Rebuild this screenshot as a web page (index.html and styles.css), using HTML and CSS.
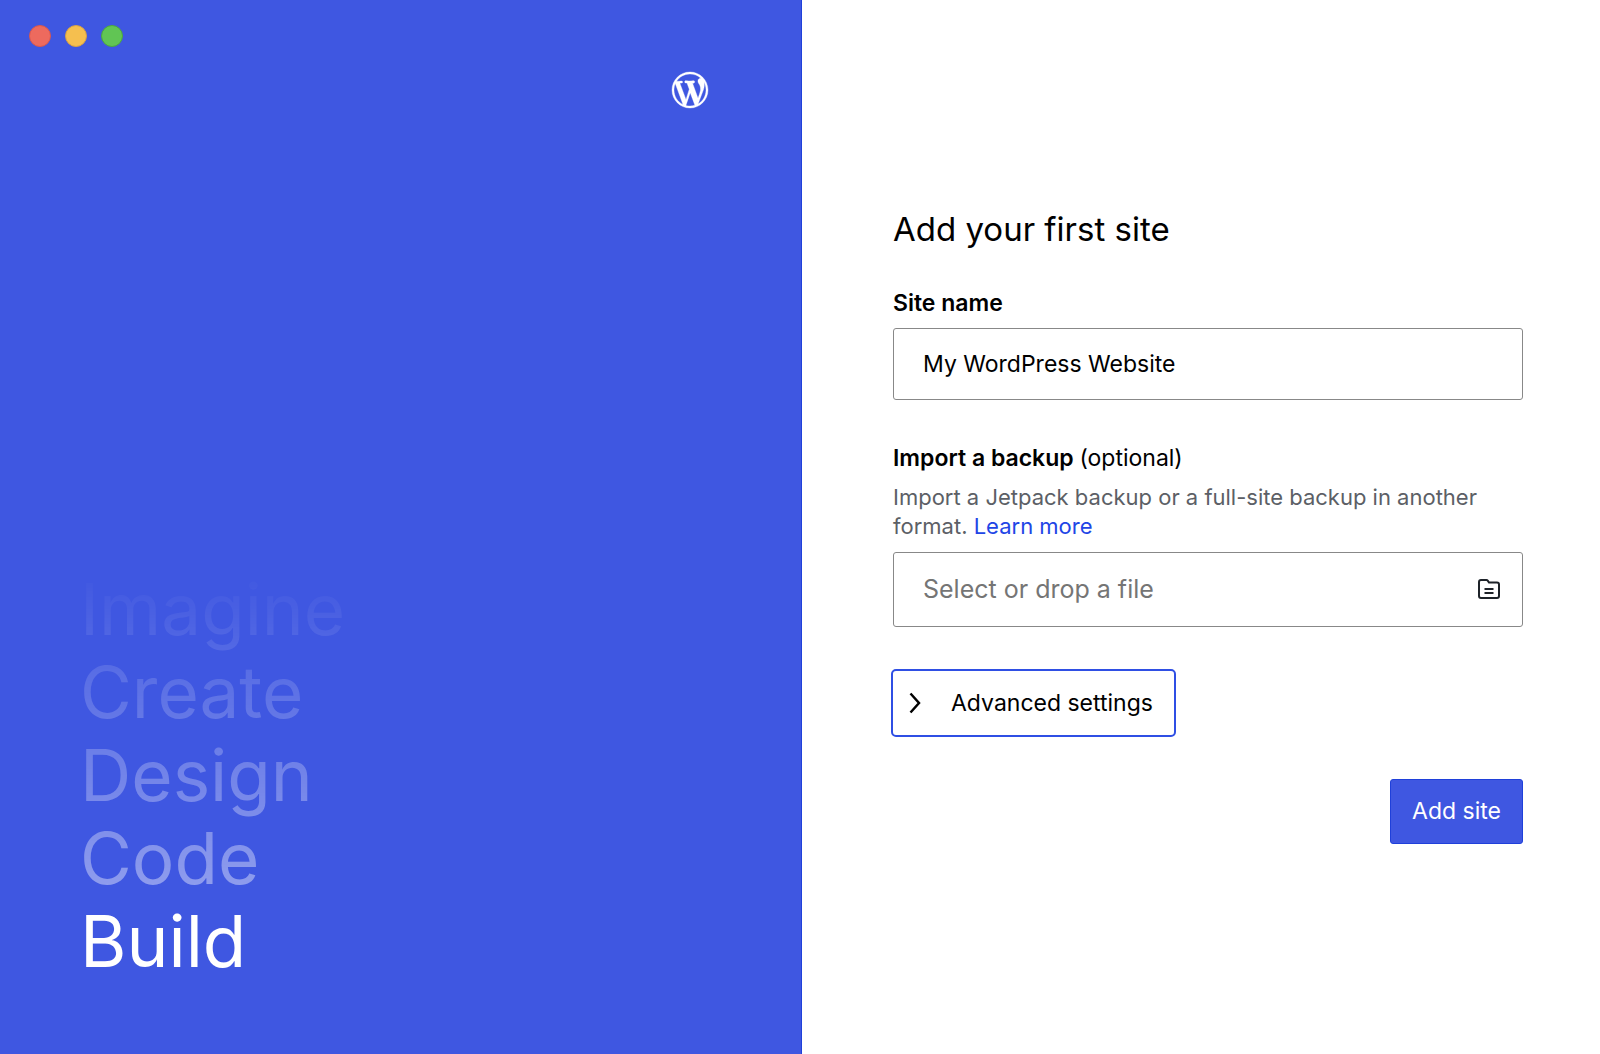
FILE: index.html
```
<!DOCTYPE html>
<html lang="en">
<head>
    <meta charset="UTF-8">
    <meta name="viewport" content="width=device-width, initial-scale=1.0">
    <title>Add your first site</title>
    <link rel="stylesheet" href="styles.css">
</head>
<body>
    <div class="container">
        <div class="hero">
            <div class="window-controls">
                <button type="button" class="dot close" aria-label="Close"></button>
                <button type="button" class="dot minimize" aria-label="Minimize"></button>
                <button type="button" class="dot zoom" aria-label="Zoom"></button>
            </div>
            <svg class="logo" viewBox="0 0 20 20" aria-hidden="true">
                <path d="M20 10c0-5.51-4.49-10-10-10C4.48 0 0 4.49 0 10c0 5.52 4.48 10 10 10 5.51 0 10-4.48 10-10zM7.78 15.37L4.37 6.22c.55-.02 1.17-.08 1.17-.08.5-.06.44-1.13-.06-1.11 0 0-1.45.11-2.37.11-.18 0-.37 0-.58-.01C4.12 2.69 6.87 1.11 10 1.11c2.33 0 4.45.87 6.05 2.34-.68-.11-1.65.39-1.65 1.58 0 .74.45 1.36.9 2.1.35.61.55 1.36.55 2.46 0 1.49-1.4 5-1.4 5l-3.03-8.37c.54-.02.82-.17.82-.17.5-.05.44-1.25-.06-1.22 0 0-1.44.12-2.38.12-.87 0-2.33-.12-2.33-.12-.5-.03-.56 1.2-.06 1.22l.92.08 1.26 3.41zM17.41 10c.24-.64.74-1.87.43-4.25.7 1.29 1.05 2.71 1.05 4.25 0 3.29-1.73 6.24-4.4 7.78.97-2.59 1.94-5.2 2.92-7.78zM6.1 18.09C3.12 16.65 1.11 13.53 1.11 10c0-1.3.23-2.48.72-3.59C3.25 10.3 4.67 14.2 6.1 18.09zm4.03-6.63l2.58 6.98c-.86.29-1.76.45-2.71.45-.79 0-1.57-.11-2.29-.33.81-2.38 1.62-4.74 2.42-7.1z"/>
            </svg>
            <div class="words">
                <div class="words-faded">
                    <p>Imagine</p>
                    <p>Create</p>
                    <p>Design</p>
                    <p>Code</p>
                </div>
                <p>Build</p>
            </div>
        </div>
        <main class="main-content">
            <form class="site-form">
                <h1>Add your first site</h1>

                <div class="field">
                    <label class="field-label" for="site-name">Site name</label>
                    <input class="text-input" type="text" id="site-name" value="My WordPress Website">
                </div>

                <div class="field">
                    <label class="field-label" for="backup">Import a backup <span class="optional">(optional)</span></label>
                    <p class="help">Import a Jetpack backup or a full-site backup in another format. <a href="#">Learn more</a></p>
                    <label class="file-drop">
                        <input class="file-input" type="file" id="backup">
                        <span>Select or drop a file</span>
                        <svg class="folder-icon" viewBox="0 0 22 20" aria-hidden="true">
                            <path d="M1 3a2 2 0 0 1 2-2h5.500a1.500 1.500 0 0 1 1.200.6L11 3.500h8a2 2 0 0 1 2 2V17a2 2 0 0 1-2 2H3a2 2 0 0 1-2-2z"/>
                            <path d="M6.500 10h9M6.500 14h9"/>
                        </svg>
                    </label>
                </div>

                <button type="button" class="advanced">
                    <svg class="chevron" viewBox="0 0 12 22" aria-hidden="true">
                        <path d="M1.500 1.500l8.500 9.500-8.500 9.500"/>
                    </svg>
                    Advanced settings
                </button>

                <button type="submit" class="submit">Add site</button>
            </form>
        </main>
    </div>
</body>
</html>
```

FILE: styles.css
```
* {
    box-sizing: border-box;
}

body {
    margin: 0;
    font-family: Inter, "Liberation Sans", sans-serif;
    font-size: 23px;
    color: #000;
    background-color: #fff;
}

h1, p {
    margin: 0;
    font-weight: 400;
}

button, input {
    font: inherit;
    color: inherit;
}

.container {
    display: grid;
    grid-template-columns: 401fr 399fr;
    min-height: 100vh;
}

/* left side */
.hero {
    display: flex;
    flex-direction: column;
    padding: 25px 93px 71px 80px;
    color: #fff;
    background-color: #3f57e1;
    border-right: 1px solid #1f40da;
}

.window-controls {
    display: flex;
    gap: 14px;
    margin-left: -51px;
}

.dot {
    width: 22px;
    height: 22px;
    padding: 0;
    border: 1px solid;
    border-radius: 50%;
}

.close {
    background-color: #ed6a5e;
    border-color: #d9584f;
}

.minimize {
    background-color: #f5bf4f;
    border-color: #d8a243;
}

.zoom {
    background-color: #61c554;
    border-color: #4ba73f;
}

.logo {
    align-self: flex-end;
    width: 36px;
    height: 36px;
    margin-top: 25px;
    overflow: visible;
    fill: #fff;
    stroke: #fff;
    stroke-width: 0.2;
}

.words {
    margin-top: auto;
    font-size: 71px;
    line-height: 83px;
}

.words-faded {
    -webkit-mask-image: linear-gradient(transparent, rgba(0, 0, 0, 0.43));
    mask-image: linear-gradient(transparent, rgba(0, 0, 0, 0.43));
}

/* right side */
.main-content {
    display: flex;
    align-items: center;
    padding: 0 77px 2px 91px;
}

.site-form {
    display: flex;
    flex-direction: column;
    width: 100%;
}

h1 {
    margin-bottom: 38px;
    font-size: 33px;
    line-height: 40px;
}

.field {
    margin-bottom: 42px;
}

.field-label {
    display: block;
    margin-bottom: 9px;
    font-weight: 600;
    line-height: 32px;
}

.optional {
    font-weight: 400;
}

.text-input {
    display: block;
    width: 100%;
    height: 72px;
    padding: 0 29px;
    background-color: #fff;
    border: 1px solid #888;
    border-radius: 3px;
}

.help {
    margin-bottom: 11px;
    font-size: 22px;
    line-height: 29px;
    color: #5c5f66;
}

.help a {
    color: #2145e6;
    text-decoration: none;
}

.file-drop {
    position: relative;
    display: flex;
    align-items: center;
    justify-content: space-between;
    height: 75px;
    padding: 0 22px 0 29px;
    font-size: 25px;
    color: #757575;
    border: 1px solid #888;
    border-radius: 3px;
}

/* the native picker fills the box, only its own text is hidden */
.file-input {
    position: absolute;
    inset: 0;
    width: 100%;
    font-size: 0;
    opacity: 0;
}

.folder-icon {
    width: 22px;
    height: 20px;
    fill: none;
    stroke: #1e2329;
    stroke-width: 2;
}

.advanced {
    display: flex;
    align-items: center;
    align-self: flex-start;
    gap: 30px;
    height: 68px;
    margin: 0 0 42px -2px;
    padding: 0 21px 0 16px;
    background-color: #fff;
    border: 2px solid #2f4fe4;
    border-radius: 5px;
}

.chevron {
    width: 12px;
    height: 22px;
    fill: none;
    stroke: #000;
    stroke-width: 2.500;
}

.submit {
    align-self: flex-end;
    height: 65px;
    padding: 0 21px;
    color: #fff;
    background-color: #3f57e1;
    border: 1px solid #1f40da;
    border-radius: 3px;
}
```
